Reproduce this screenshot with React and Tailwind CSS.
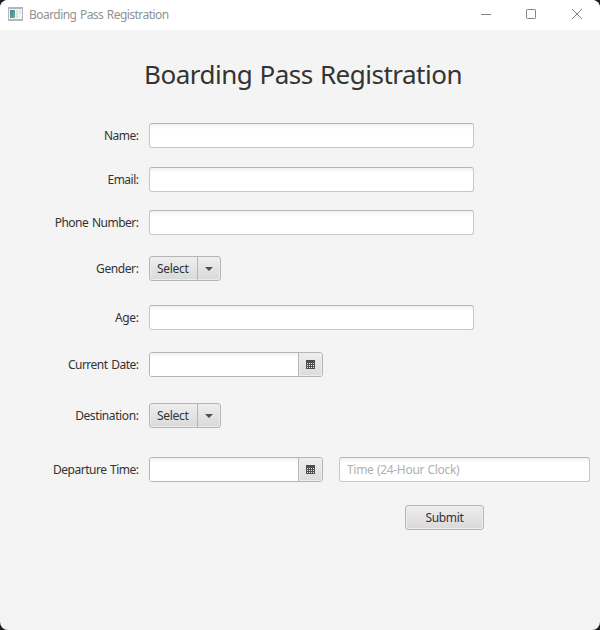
import React from "react";

function Row({ label, labelClass, className, children }) {
  return (
    <div className={`flex h-[25px] ${className}`}>
      <label className="mr-[10.5px] flex w-[138.5px] shrink-0 justify-end">
        <span className={`whitespace-nowrap leading-[25px] ${labelClass}`}>{label}</span>
      </label>
      {children}
    </div>
  );
}

function TextField({ className, placeholder }) {
  return (
    <input
      type="text"
      placeholder={placeholder}
      className={`h-[25px] rounded-[3px] border border-[#c8c8c8] border-t-[#b5b5b5] bg-white bg-linear-to-b from-[#f2f2f2] to-white to-[5px] px-[7px] text-[12px] tracking-[-0.3px] [word-spacing:0.5px] outline-none placeholder:text-[#b0b0b0] ${className}`}
    />
  );
}

function SplitMenu() {
  return (
    <button className="flex h-[25px] w-[72px] rounded-[3px] border border-[#b5b5b5] bg-linear-to-b from-[#eeeeee] to-[#d9d9d9] shadow-[inset_0_0_0_1px_#ededed]">
      <span className="w-[48px] border-r border-[#b5b5b5] pl-[7px] text-left text-[12px] leading-[23px] tracking-[-0.3px]">Select</span>
      <span className="flex h-[23px] flex-1 items-center justify-center">
        <svg width="8" height="4" viewBox="0 0 8 4" fill="#4d4d4d"><path d="M0 0H8L4 4Z" /></svg>
      </span>
    </button>
  );
}

function DateField() {
  return (
    <div className="flex h-[25px] w-[174px] overflow-hidden rounded-[3px] border border-[#b5b5b5] bg-white">
      <input type="text" className="w-[148px] bg-linear-to-b from-[#f2f2f2] to-white to-[5px] px-[7px] text-[12px] outline-none" />
      <button className="flex flex-1 items-center justify-center border-l border-[#b5b5b5] bg-linear-to-b from-[#eeeeee] to-[#dcdcdc] shadow-[inset_0_0_0_1px_#ededed]">
        <svg width="9" height="9" viewBox="0 0 9 9" shapeRendering="crispEdges">
          <path fill="#4d4d4d" d="M0 0H9V9H0Z" />
          <path fill="#eeeeee" d="M1 3h1v1H1zM3 3h1v1H3zM5 3h1v1H5zM7 3h1v1H7zM1 5h1v1H1zM3 5h1v1H3zM5 5h1v1H5zM7 5h1v1H7zM1 7h1v1H1zM3 7h1v1H3zM5 7h1v1H5zM7 7h1v1H7z" />
        </svg>
      </button>
    </div>
  );
}

function TitleBar() {
  return (
    <header className="flex h-[30px] bg-white text-[#929292]">
      <svg className="ml-2 mt-[7px]" width="15" height="14" viewBox="0 0 15 14">
        <defs>
          <linearGradient id="pane" x1="0" y1="0" x2="1" y2="1">
            <stop offset="0" stopColor="#5379a8" />
            <stop offset="1" stopColor="#63b58b" />
          </linearGradient>
        </defs>
        <path fill="#b2b6bf" d="M0 0H15V14H0Z" />
        <path fill="#f3f4f6" d="M1 2H14V12H1Z" />
        <path fill="url(#pane)" d="M2 3H7V11H2Z" />
        <path fill="#d5eadf" d="M8 3H10V11H8Z" />
        <path fill="#dfe5e9" d="M11 3H13V7H11Z" />
      </svg>
      <span className="ml-[6px] whitespace-nowrap text-[12px] leading-[30px] tracking-[-0.55px] [word-spacing:1px]">Boarding Pass Registration</span>
      <div className="ml-auto flex h-[28px]">
        <button className="flex w-[46px] items-center justify-center">
          <svg width="10" height="10" viewBox="0 0 10 10" stroke="#858585"><path d="M0 5.5H10" /></svg>
        </button>
        <button className="flex w-[44px] items-center justify-center">
          <svg width="10" height="10" viewBox="0 0 10 10" fill="none" stroke="#858585"><rect x=".5" y=".5" width="9" height="9" rx=".7" /></svg>
        </button>
        <button className="flex w-[47px] items-center justify-center pl-px">
          <svg width="10" height="10" viewBox="0 0 10 10" stroke="#858585"><path d="M0 0L10 10M10 0L0 10" /></svg>
        </button>
      </div>
    </header>
  );
}

export default function App() {
  return (
    <div className="h-[630px] w-[600px] bg-[#202020]">
      <div className="flex h-full flex-col overflow-hidden rounded-[8px] bg-[#f4f4f4] font-['Noto_Sans','Open_Sans',sans-serif] text-[12px] text-[#333333]">
        <TitleBar />
        <h1 className="ml-[144px] mt-[25px] h-[38px] whitespace-nowrap text-[26px] leading-[38px] tracking-[-0.5px] [word-spacing:1px]">Boarding Pass Registration</h1>
        <form>
          <Row label="Name:" labelClass="tracking-[-0.5px]" className="mt-[30px]"><TextField className="w-[325px]" /></Row>
          <Row label="Email:" labelClass="tracking-[-0.5px]" className="mt-[19px]"><TextField className="w-[325px]" /></Row>
          <Row label="Phone Number:" labelClass="tracking-[-0.5px] [word-spacing:1px]" className="mt-[18px]"><TextField className="w-[325px]" /></Row>
          <Row label="Gender:" labelClass="tracking-[-0.4px]" className="mt-[21px]"><SplitMenu /></Row>
          <Row label="Age:" labelClass="tracking-[-0.4px]" className="mt-[24px]"><TextField className="w-[325px]" /></Row>
          <Row label="Current Date:" labelClass="tracking-[-0.5px] [word-spacing:1px]" className="mt-[22px]"><DateField /></Row>
          <Row label="Destination:" labelClass="tracking-[-0.4px]" className="mt-[26px]"><SplitMenu /></Row>
          <Row label="Departure Time:" labelClass="tracking-[-0.5px] [word-spacing:1px]" className="mt-[29px]">
            <DateField />
            <TextField className="ml-4 w-[251px]" placeholder="Time (24-Hour Clock)" />
          </Row>
          <button type="button" className="ml-[405px] mt-[23px] block h-[25px] w-[79px] rounded-[3px] border border-[#b5b5b5] bg-linear-to-b from-[#eeeeee] to-[#d9d9d9] text-[12px] leading-[23px] tracking-[-0.35px] shadow-[inset_0_0_0_1px_#ededed]">Submit</button>
        </form>
      </div>
    </div>
  );
}
